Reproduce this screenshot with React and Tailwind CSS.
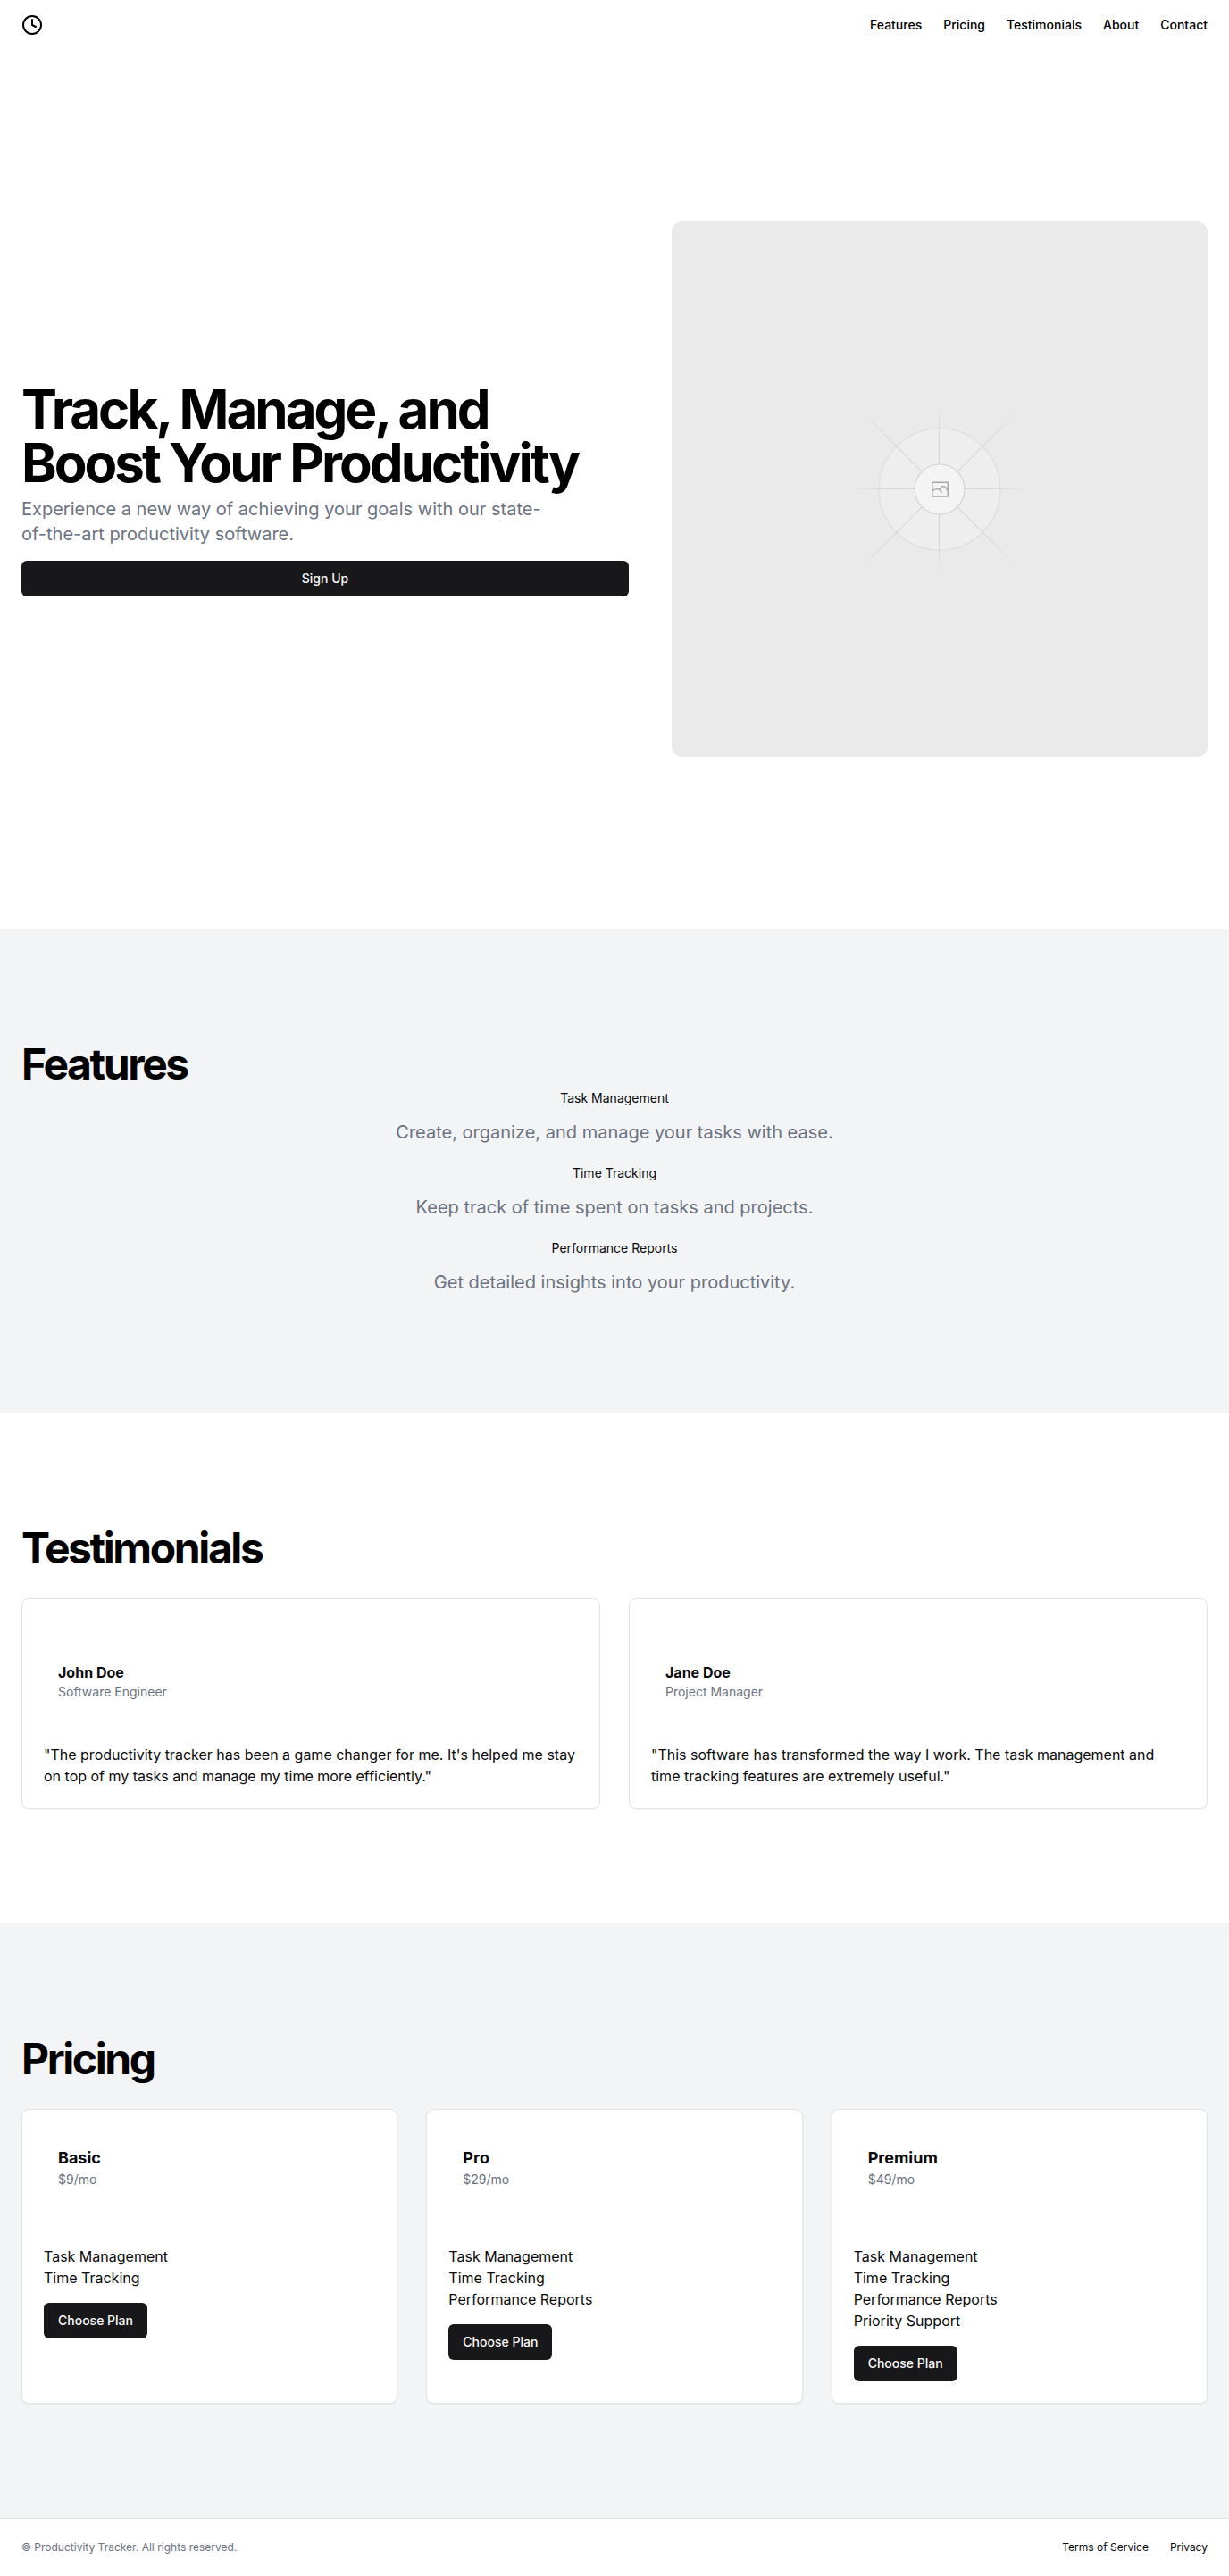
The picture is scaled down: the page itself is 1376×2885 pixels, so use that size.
const nav = ["Features", "Pricing", "Testimonials", "About", "Contact"];
const features = [
  ["Task Management", "Create, organize, and manage your tasks with ease."],
  ["Time Tracking", "Keep track of time spent on tasks and projects."],
  ["Performance Reports", "Get detailed insights into your productivity."],
];
const testimonials = [
  ["John Doe", "Software Engineer", "\"The productivity tracker has been a game changer for me. It's helped me stay on top of my tasks and manage my time more efficiently.\""],
  ["Jane Doe", "Project Manager", "\"This software has transformed the way I work. The task management and time tracking features are extremely useful.\""],
];
const plans = [
  ["Basic", "$9/mo", ["Task Management", "Time Tracking"]],
  ["Pro", "$29/mo", ["Task Management", "Time Tracking", "Performance Reports"]],
  ["Premium", "$49/mo", ["Task Management", "Time Tracking", "Performance Reports", "Priority Support"]],
];

function Placeholder() {
  return (
    <svg viewBox="0 0 1200 1200" fill="none" role="img" aria-label="Hero" className="aspect-square w-full rounded-xl">
      <defs>
        <radialGradient id="fade-axis" cx="600" cy="600" r="195" gradientUnits="userSpaceOnUse">
          <stop offset="0.6" stopColor="#C9C9C9" />
          <stop offset="1" stopColor="#C9C9C9" stopOpacity="0" />
        </radialGradient>
        <radialGradient id="fade-diagonal" cx="600" cy="600" r="260" gradientUnits="userSpaceOnUse">
          <stop offset="0.5" stopColor="#C9C9C9" />
          <stop offset="1" stopColor="#C9C9C9" stopOpacity="0" />
        </radialGradient>
      </defs>
      <rect width="1200" height="1200" fill="#EAEAEA" />
      <circle cx="600" cy="600" r="136" fill="#F9FAFB" fillOpacity="0.3" stroke="#C9C9C9" strokeOpacity="0.4" strokeWidth="2.4" />
      <g strokeWidth="2.4" opacity="0.6">
        <path stroke="url(#fade-axis)" d="M405 599H795M599 405V795" />
        <path stroke="url(#fade-diagonal)" d="M416 416L784 784M784 416L416 784" />
      </g>
      <circle cx="600" cy="600" r="56" fill="#F4F4F4" stroke="#D4D4D4" strokeWidth="2.4" />
      <g stroke="#A8A8A8" strokeWidth="3" strokeLinejoin="round">
        <rect x="583.5" y="584.5" width="35" height="31.5" rx="1" />
        <path d="M584 604C588 599 597 597 601 602C603 604 604 606 605 608M598 601C602 600 602 594 608 593C614 593 614 599 619 603" />
      </g>
    </svg>
  );
}

const heading = "text-5xl font-bold tracking-tighter text-black";
const card = "rounded-lg border border-[#e4e4e7] bg-white p-6 shadow-xs";

export default function App() {
  return (
    <div className="bg-white font-['Inter',sans-serif] text-[#09090b]">
      <header className="flex h-14 items-center px-6 text-black">
        <a href="#" aria-label="Productivity Tracker">
          <svg className="size-6" viewBox="0 0 24 24" fill="none" stroke="currentColor" strokeWidth="2" strokeLinecap="round" strokeLinejoin="round">
            <circle cx="12" cy="12" r="10" />
            <polyline points="12 6 12 12 16 14" />
          </svg>
        </a>
        <nav className="ml-auto flex gap-6 text-sm font-medium">
          {nav.map((n) => <a key={n} href={"#" + n.toLowerCase()}>{n}</a>)}
        </nav>
      </header>
      <main>
        <section className="px-6 py-48">
          <div className="grid grid-cols-[1fr_600px] items-center gap-12">
            <div className="flex flex-col gap-4">
              <div>
                <h1 className="text-6xl font-bold leading-none tracking-tighter text-black">Track, Manage, and Boost Your Productivity</h1>
                <p className="mt-2 max-w-[600px] text-xl text-[#6b7280]">Experience a new way of achieving your goals with our state-of-the-art productivity software.</p>
              </div>
              <button className="h-10 rounded-md bg-[#18181b] text-sm font-medium text-[#fafafa]">Sign Up</button>
            </div>
            <Placeholder />
          </div>
        </section>
        <section id="features" className="bg-[#f3f4f6] px-6 py-32">
          <h2 className={heading}>Features</h2>
          <div className="flex flex-col gap-[22px] py-1 text-center">
            {features.map(([t, d]) => (
              <div key={t} className="flex flex-col gap-3.5">
                <h3 className="text-sm">{t}</h3>
                <p className="text-xl text-[#6b7280]">{d}</p>
              </div>
            ))}
          </div>
        </section>
        <section id="testimonials" className="px-6 py-32">
          <h2 className={heading}>Testimonials</h2>
          <div className="mt-8 grid grid-cols-2 gap-8">
            {testimonials.map(([n, r, q]) => (
              <article key={n} className={card}>
                <div className="flex flex-col gap-0.5 px-4 py-12">
                  <h3 className="font-bold leading-5">{n}</h3>
                  <p className="text-sm text-[#6b7280]">{r}</p>
                </div>
                <p>{q}</p>
              </article>
            ))}
          </div>
        </section>
        <section id="pricing" className="bg-[#f3f4f6] px-6 py-32">
          <h2 className={heading}>Pricing</h2>
          <div className="mt-8 grid grid-cols-3 gap-8">
            {plans.map(([n, p, items]) => (
              <article key={n} className={card}>
                <div className="px-4 pt-4 pb-16">
                  <h3 className="text-lg font-bold">{n}</h3>
                  <p className="text-sm text-[#6b7280]">{p}</p>
                </div>
                <ul>{items.map((i) => <li key={i}>{i}</li>)}</ul>
                <button className="mt-4 h-10 rounded-md bg-[#18181b] px-4 text-sm font-medium text-[#fafafa]">Choose Plan</button>
              </article>
            ))}
          </div>
        </section>
      </main>
      <footer className="flex items-center justify-between border-t border-[#e4e4e7] px-6 py-6 text-xs">
        <p className="text-[#6b7280]">© Productivity Tracker. All rights reserved.</p>
        <nav className="flex gap-6">
          <a href="#terms">Terms of Service</a>
          <a href="#privacy">Privacy</a>
        </nav>
      </footer>
    </div>
  );
}
